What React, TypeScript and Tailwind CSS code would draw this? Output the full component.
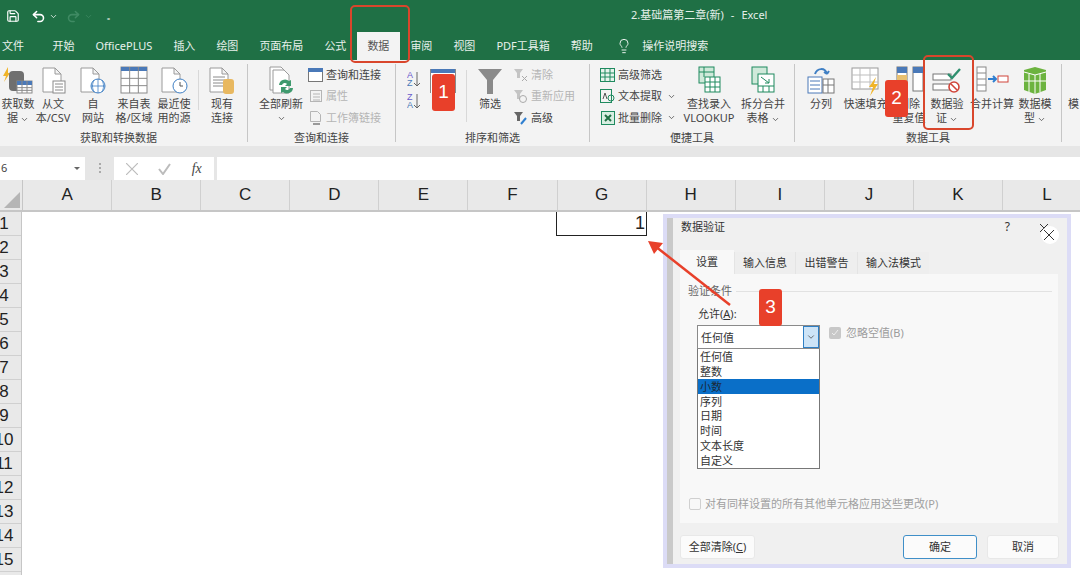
import { ChevronDown, Lightbulb, Redo2, Save, Undo2 } from "lucide-react";
import type { ReactNode } from "react";

const FONT = "font-['Noto_Sans','Noto_Sans_CJK_SC',sans-serif]";
const TABS = ["文件", "开始", "OfficePLUS", "插入", "绘图", "页面布局", "公式", "数据", "审阅", "视图", "PDF工具箱", "帮助"];
const COLS = ["A", "B", "C", "D", "E", "F", "G", "H", "I", "J", "K", "L"];
const ROWS = [1, 2, 3, 4, 5, 6, 7, 8, 9, 10, 11, 12, 13, 14, 15, 16];
const LIST = ["任何值", "整数", "小数", "序列", "日期", "时间", "文本长度", "自定义"];

function Ico({ children, w = 32 }: { children: ReactNode; w?: number }) {
  return (
    <svg width={w} height="32" viewBox={`0 0 ${w} 32`} fill="none" className="shrink-0">
      {children}
    </svg>
  );
}

function Page({ x = 6 }: { x?: number }) {
  return <path d={`M${x} 3h12l6 6v18H${x}z M${x + 12} 3v6h6`} fill="#fff" stroke="#9a9a9a" />;
}

function Sheet({ x, y, w, h }: { x: number; y: number; w: number; h: number }) {
  const c = w / 3;
  const r = (h - 4) / 3;
  return (
    <g stroke="#8a8a8a" fill="#fff">
      <rect x={x} y={y} width={w} height={h} />
      <rect x={x} y={y} width={w} height={4} fill="#4a79b8" stroke="none" />
      <path d={`M${x + c} ${y}v${h}M${x + 2 * c} ${y}v${h}M${x} ${y + 4 + r}h${w}M${x} ${y + 4 + 2 * r}h${w}`} />
    </g>
  );
}

function RibbonBtn({ icon, lines, className }: { icon: ReactNode; lines: ReactNode[]; className: string }) {
  return (
    <div className={`flex shrink-0 flex-col items-center whitespace-nowrap text-[11px] leading-[14px] ${className}`}>
      <div className="flex h-[33px] items-center justify-center">{icon}</div>
      {lines.map((l, i) => (
        <div key={i}>{l}</div>
      ))}
    </div>
  );
}

function Caret() {
  return <ChevronDown className="ml-[2px] inline h-[9px] w-[9px]" strokeWidth={2} />;
}

function Group({ label, children, className }: { label: string; children: ReactNode; className: string }) {
  return (
    <div className={`flex h-[78px] shrink-0 flex-col border-r border-[#c6c6c6] ${className}`}>
      <div className="flex h-[67px] shrink-0">{children}</div>
      <div className="shrink-0 text-center text-[11px] leading-[14px]">{label}</div>
    </div>
  );
}

function SmallRow({ icon, text, muted, caret }: { icon: ReactNode; text: string; muted?: boolean; caret?: boolean }) {
  return (
    <div className={`flex h-[21.5px] items-center gap-[3px] whitespace-nowrap text-[11px] ${muted ? "text-[#b5b5b5]" : ""}`}>
      <svg width="15" height="16" viewBox="0 0 15 16" fill="none" className="shrink-0">
        {icon}
      </svg>
      {text}
      {caret && <Caret />}
    </div>
  );
}

function SortIcon({ top, bottom }: { top: string; bottom: string }) {
  return (
    <svg width="16" height="18" viewBox="0 0 16 18" fill="none">
      <text x="0" y="8" fontSize="9" fill="#6a5acd" fontFamily="Liberation Sans">{top}</text>
      <text x="0" y="16" fontSize="9" fill="#4a79b8" fontFamily="Liberation Sans">{bottom}</text>
      <path d="M10 2v14m-3-3 3 3 3-3" stroke="#666" />
    </svg>
  );
}

function Ribbon() {
  return (
    <div className="flex h-[86px] items-start overflow-hidden bg-[#f3f3f3] pt-[4px] text-[#444]">
      <Group label="获取和转换数据" className="-ml-[10px] w-[258px]">
        <RibbonBtn
          className="ml-[8px] w-[40px]"
          lines={["获取数", <>据<Caret /></>]}
          icon={
            <Ico>
              <path d="M6 2l-5 9h3l-2 6 6-9H6z" fill="#f0b429" />
              <rect x="7" y="6" width="15" height="20" rx="4" fill="#6f6f6f" />
              <Sheet x={15} y={16} w={15} h={12} />
            </Ico>
          }
        />
        <RibbonBtn
          className="w-[30px]"
          lines={["从文", "本/CSV"]}
          icon={
            <Ico>
              <Page />
              <rect x="16" y="16" width="12" height="12" fill="#fff" stroke="#8a8a8a" />
              <path d="M18 19h8M18 22h8M18 25h8" stroke="#8a8a8a" />
            </Ico>
          }
        />
        <RibbonBtn
          className="w-[50px]"
          lines={["自", "网站"]}
          icon={
            <Ico>
              <Page x={4} />
              <circle cx="21" cy="21" r="7" fill="#fff" stroke="#3f7fc4" />
              <path d="M14 21h14M21 14v14M17 15c-2 4-2 8 0 12M25 15c2 4 2 8 0 12" stroke="#3f7fc4" strokeWidth=".8" />
            </Ico>
          }
        />
        <RibbonBtn className="w-[32px]" lines={["来自表", "格/区域"]} icon={<Ico><Sheet x={3} y={2} w={26} h={26} /></Ico>} />
        <RibbonBtn
          className="w-[48px]"
          lines={["最近使", "用的源"]}
          icon={
            <Ico>
              <Page x={4} />
              <circle cx="22" cy="21" r="7" fill="#fff" stroke="#3f7fc4" />
              <path d="M22 17v4h3" stroke="#555" />
            </Ico>
          }
        />
        <div className="my-[6px] h-[40px] w-px bg-[#d8d8d8]" />
        <RibbonBtn
          className="w-[46px]"
          lines={["现有", "连接"]}
          icon={
            <Ico>
              <Page x={4} />
              <path d="M7 12h12M7 15h12M7 18h10M7 21h10" stroke="#8a8a8a" />
              <rect x="17" y="14" width="11" height="15" rx="3" fill="#e8b860" />
            </Ico>
          }
        />
      </Group>

      <Group label="查询和连接" className="w-[148px]">
        <RibbonBtn
          className="w-[60px] pl-[6px]"
          lines={["全部刷新", <ChevronDown key="c" className="mx-auto mt-[3px] h-[9px] w-[9px]" />]}
          icon={
            <Ico>
              <path d="M5 2h11l5 5v18H5z" fill="#fff" stroke="#9a9a9a" />
              <path d="M8 5h11l5 5v18H8z" fill="#fff" stroke="#9a9a9a" />
              <path d="M14 20a6 6 0 0 1 10-4l2-1v6h-6l2-2a3 3 0 0 0-5 1zM28 23a6 6 0 0 1-10 4l-2 1v-6h6l-2 2a3 3 0 0 0 5-1z" fill="#3f9a6e" />
            </Ico>
          }
        />
        <div className="flex flex-col">
          <SmallRow text="查询和连接" icon={<><rect x=".5" y="1.5" width="14" height="13" fill="#fff" stroke="#777" /><rect x="0" y="1" width="15" height="4" fill="#4a79b8" /></>} />
          <SmallRow muted text="属性" icon={<><rect x="2.5" y="2.5" width="11" height="11" stroke="#b5b5b5" /><path d="M5 6h7M5 9h7M5 12h7" stroke="#b5b5b5" /></>} />
          <SmallRow muted text="工作簿链接" icon={<><path d="M2.5 1.5h7l3 3v7h-10z" stroke="#b5b5b5" /><path d="M5 14h7" stroke="#999" strokeWidth="2" /></>} />
        </div>
      </Group>

      <Group label="排序和筛选" className="w-[194px]">
        <div className="ml-[11px] flex w-[19px] flex-col gap-[4px] pt-[6px]">
          <SortIcon top="A" bottom="Z" />
          <SortIcon top="Z" bottom="A" />
        </div>
        <div className="mt-[5px] ml-[4px] h-[24px] w-[26px] border-x border-[#8a8a8a] bg-white">
          <div className="h-[4px] bg-[#4a79b8]" />
        </div>
        <div className="mr-[5px] ml-[10px] mt-[6px] h-[52px] w-px bg-[#d8d8d8]" />
        <RibbonBtn
          className="w-[36px]"
          lines={["筛选"]}
          icon={
            <Ico w={28}>
              <path d="M2 4h24L17 15v14h-6V15z" fill="#8a8a8a" />
            </Ico>
          }
        />
        <div className="ml-[5px] flex flex-col">
          <SmallRow muted text="清除" icon={<><path d="M1 2h9L7 6v5H4V6z" fill="#c4c4c4" /><path d="M9 9l5 5m0-5-5 5" stroke="#aaa" /></>} />
          <SmallRow muted text="重新应用" icon={<><path d="M1 2h9L7 6v5H4V6z" fill="#c4c4c4" /><circle cx="10" cy="11" r="3.5" stroke="#aaa" /></>} />
          <SmallRow text="高级" icon={<><path d="M1 2h9L7 6v5H4V6z" fill="#666" /><path d="M8 14l5-6" stroke="#2f7fd0" strokeWidth="2" /></>} />
        </div>
      </Group>

      <Group label="便捷工具" className="w-[205px]">
        <div className="ml-[10px] flex w-[81px] flex-col">
          <SmallRow text="高级筛选" icon={<><rect x=".5" y="1.5" width="14" height="13" stroke="#1f8a5f" fill="#e6f3ec" /><path d="M5 2v12M10 2v12M1 6h14M1 10h14" stroke="#1f8a5f" /></>} />
          <SmallRow caret text="文本提取" icon={<><rect x=".5" y="1.5" width="11" height="13" stroke="#1f8a5f" /><path d="M3 11l2-6 2 6" stroke="#555" /><circle cx="11" cy="10" r="3" stroke="#1f8a5f" /></>} />
          <SmallRow caret text="批量删除" icon={<><rect x="1.5" y="1.5" width="13" height="13" stroke="#1f8a5f" fill="#d8eee2" /><path d="M5 5l6 6m0-6-6 6" stroke="#1f7044" strokeWidth="2" /></>} />
        </div>
        <RibbonBtn
          className="w-[56px]"
          lines={["查找录入", "VLOOKUP"]}
          icon={
            <Ico>
              <rect x="6" y="2" width="15" height="16" fill="#cfe9da" stroke="#1f8a5f" />
              <rect x="12" y="12" width="15" height="15" fill="#fff" stroke="#1f8a5f" />
              <path d="M17 12v15M22 12v15M12 17h15M12 22h15M6 7h15M11 2v10" stroke="#1f8a5f" />
            </Ico>
          }
        />
        <RibbonBtn
          className="w-[52px]"
          lines={["拆分合并", <>表格<Caret /></>]}
          icon={
            <Ico>
              <rect x="5" y="2" width="15" height="17" fill="#cfe9da" stroke="#1f8a5f" />
              <rect x="11" y="9" width="16" height="18" fill="#fff" stroke="#1f8a5f" />
              <path d="M11 21h16M16 21v6M22 21v6M14 12l8 6m0-4v4h-4" stroke="#1f8a5f" />
            </Ico>
          }
        />
      </Group>

      <Group label="数据工具" className="w-[267px]">
        <RibbonBtn
          className="ml-[8px] w-[36px]"
          lines={["分列"]}
          icon={
            <Ico>
              <rect x="3" y="12" width="14" height="16" fill="#fff" stroke="#4a79b8" />
              <path d="M5 16h10M5 20h10M5 24h10" stroke="#4a79b8" />
              <rect x="18" y="14" width="11" height="14" fill="#fff" stroke="#777" />
              <path d="M23 14v14M18 20h11" stroke="#777" />
              <path d="M10 9c2-6 10-7 12 0m0 0-3-2m3 2 2-3" stroke="#3f7fc4" strokeWidth="2" />
            </Ico>
          }
        />
        <RibbonBtn
          className="w-[53px]"
          lines={["快速填充"]}
          icon={
            <Ico>
              <rect x="2" y="3" width="26" height="21" fill="#fff" stroke="#999" />
              <path d="M2 10h26M2 17h26M10 3v21M20 3v21" stroke="#bdbdbd" />
              <path d="M26 12l-7 10h4l-3 9 8-12h-4z" fill="#f0b429" />
            </Ico>
          }
        />
        <RibbonBtn
          className="w-[34px]"
          lines={["删除", "重复值"]}
          icon={
            <Ico>
              <rect x="4" y="2" width="10" height="24" fill="#fff" stroke="#777" />
              <rect x="4" y="2" width="10" height="6" fill="#4a79b8" />
              <rect x="4" y="10" width="10" height="6" fill="#e8c070" />
              <rect x="20" y="2" width="10" height="24" fill="#fff" stroke="#777" />
              <rect x="20" y="2" width="10" height="6" fill="#4a79b8" />
            </Ico>
          }
        />
        <RibbonBtn
          className="ml-[4px] w-[34px]"
          lines={["数据验", <>证<Caret /></>]}
          icon={
            <Ico>
              <rect x="2" y="9" width="18" height="6" fill="#fff" stroke="#777" />
              <rect x="2" y="19" width="18" height="6" fill="#fff" stroke="#777" />
              <path d="M17 9l4 4 8-9" stroke="#2f8f6f" strokeWidth="2.4" />
              <circle cx="23" cy="22" r="5" fill="#fff" stroke="#d0453a" strokeWidth="1.6" />
              <path d="M20 19l6 6" stroke="#d0453a" strokeWidth="1.6" />
            </Ico>
          }
        />
        <RibbonBtn
          className="ml-[6px] w-[44px]"
          lines={["合并计算"]}
          icon={
            <Ico w={34}>
              <rect x="2" y="2" width="9" height="24" fill="#fff" stroke="#888" />
              <path d="M2 8h9M2 14h9M2 20h9" stroke="#888" />
              <path d="M13 14h8m-3-3 3 3-3 3" stroke="#2f7fd0" strokeWidth="2" />
              <rect x="23" y="11" width="10" height="6" fill="#fff" stroke="#d0453a" />
            </Ico>
          }
        />
        <RibbonBtn
          className="ml-[4px] w-[34px]"
          lines={["数据模", <>型<Caret /></>]}
          icon={
            <Ico>
              <path d="M5 5l11-3 11 3v20l-11 4-11-4z" fill="#6cb33f" />
              <path d="M16 10v19M16 10l11-3M16 10 5 7M21 9v18M10 9v18M16 16h11M5 16h11" stroke="#fff" />
            </Ico>
          }
        />
      </Group>
      <div className="ml-[6px] pt-[33px] text-[11px] leading-[14px] whitespace-nowrap">模</div>
    </div>
  );
}

function FormulaBar() {
  return (
    <div className="flex h-[34px] items-start gap-[3px] bg-[#e6e6e6] pt-[11px]">
      <div className="flex h-[23px] w-[85px] items-center justify-between bg-white pl-px pr-[5px] text-[11px] text-[#444]">
        6
        <span className="h-0 w-0 border-x-[3px] border-t-[3px] border-x-transparent border-t-[#666]" />
      </div>
      <div className="flex w-[23px] flex-col items-center gap-[2px] pt-[6px]">
        <i className="h-[2px] w-[2px] bg-[#aaa]" />
        <i className="h-[2px] w-[2px] bg-[#aaa]" />
        <i className="h-[2px] w-[2px] bg-[#aaa]" />
      </div>
      <div className="flex h-[23px] w-[100px] items-center justify-around bg-white px-[2px] text-[#bcbcbc]">
        <svg width="12" height="12" viewBox="0 0 12 12" stroke="currentColor" strokeWidth="1.2"><path d="M0 0l12 12M12 0 0 12" /></svg>
        <svg width="13" height="12" viewBox="0 0 13 12" fill="none" stroke="currentColor" strokeWidth="2"><path d="M1 6l4 5 7-10" /></svg>
        <span className="font-['Liberation_Serif',serif] text-[14px] italic text-[#444]">fx</span>
      </div>
      <div className="h-[23px] flex-1 bg-white" />
    </div>
  );
}

function Sheet1() {
  return (
    <div className="overflow-hidden bg-white">
      <div className="flex h-[32px] border-b-2 border-[#c6c6c6] bg-[#e9e9e9]">
        <div className="relative w-[23px] shrink-0 border-r border-[#c6c6c6]">
          <span className="absolute right-[2px] bottom-[2px] h-0 w-0 border-b-[16px] border-l-[16px] border-b-[#b5b5b5] border-l-transparent" />
        </div>
        {COLS.map((c) => (
          <div key={c} className="flex w-[89.1px] shrink-0 items-center justify-center border-r border-[#d0d0d0] font-['Liberation_Sans',sans-serif] text-[17px] text-[#222]">
            {c}
          </div>
        ))}
      </div>
      <div className="flex">
        <div className="w-[22px] shrink-0 overflow-hidden border-r border-[#c6c6c6] bg-[#e9e9e9]">
          {ROWS.map((r) => (
            <div key={r} className="-ml-[14px] h-[24px] w-[36px] border-b border-[#d0d0d0] text-center font-['Liberation_Sans',sans-serif] text-[17px] leading-[23px] text-[#222]">
              {r}
            </div>
          ))}
        </div>
        <div className="ml-[534px] h-[24px] w-[91px] border border-t-0 border-[#222] pr-px text-right font-['Liberation_Sans',sans-serif] text-[18px] leading-[23px] text-[#222]">
          1
        </div>
      </div>
    </div>
  );
}

function Dialog() {
  return (
    <div className="absolute top-[214px] left-[663px] flex h-[354px] w-[408px] border-4 border-[#dcdcf6] text-[11px] text-[#333]">
      <div className="w-[6px] bg-[#c9c9c9]" />
      <div className="flex flex-1 flex-col bg-[#f0f0f0] pl-[7px] pr-[8px]">
        <div className="flex h-[32px] shrink-0 items-start justify-between pt-[2px] pl-px">
          <span className="leading-[14px]">数据验证</span>
          <span className="mr-[49px] text-[12px] leading-[14px]">?</span>
        </div>
        <div className="flex h-[24px] items-end text-[11px]">
          <div className="flex h-[24px] w-[54px] items-center justify-center bg-[#f8f8f8]">设置</div>
          {[["输入信息", "w-[61px]"], ["出错警告", "w-[62px]"], ["输入法模式", "w-[72px]"]].map(([t, w]) => (
            <div key={t} className={`flex h-[22px] items-center justify-center border-l border-[#e4e4e4] bg-[#eeeeee] ${w}`}>{t}</div>
          ))}
        </div>
        <div className="flex h-[249px] w-[378px] flex-col bg-[#f8f8f8] pl-[8px] pr-[6px]">
          <div className="mt-[10px] flex h-[14px] items-center gap-[4px] text-[#666]">
            验证条件
            <div className="h-px flex-1 bg-[#e2e2e2]" />
          </div>
          <div className="mt-[8px] pl-[10px] leading-[16px]">允许(<u>A</u>):</div>
          <div className="mt-[3px] flex pl-[9px]">
            <div className="w-[123px]">
              <div className="flex h-[24px] border border-[#8a8a8a] bg-white">
                <span className="flex-1 pl-[3px] leading-[23px]">任何值</span>
                <span className="flex w-[16px] items-center justify-center border border-[#2f7fc4] bg-[#cde4f7] text-[#555]">
                  <ChevronDown className="h-[10px] w-[10px]" />
                </span>
              </div>
              <div className="border border-t-0 border-[#777] bg-white">
                {LIST.map((l) => (
                  <div key={l} className={`h-[14.85px] pl-[2px] leading-[15px] ${l === "小数" ? "bg-[#0a6fc8] text-[#1a2a3a]" : ""}`}>
                    {l}
                  </div>
                ))}
              </div>
            </div>
            <div className="ml-[9px] flex h-[16px] items-center gap-[5px] text-[#9c9c9c]">
              <span className="flex h-[12px] w-[12px] items-center justify-center rounded-[2px] bg-[#c8c8c8]">
                <svg width="8" height="8" viewBox="0 0 8 8" fill="none" stroke="#eee"><path d="M1 4l2 2 4-5" /></svg>
              </span>
              忽略空值(B)
            </div>
          </div>
          <div className="mt-[27px] flex items-center gap-[4px] pl-px text-[#a0a0a0]">
            <span className="h-[12px] w-[12px] rounded-[2px] border border-[#d0d0d0]" />
            对有同样设置的所有其他单元格应用这些更改(P)
          </div>
        </div>
        <div className="mt-[12px] flex text-[11px]">
          <div className="flex h-[24px] w-[75px] items-center justify-center rounded-[3px] border border-[#e8e8e8] bg-[#fbfbfb]">全部清除(<u>C</u>)</div>
          <div className="ml-auto flex h-[24px] w-[74px] items-center justify-center rounded-[3px] border border-[#3f8fc8] bg-[#fbfbfb]">确定</div>
          <div className="ml-[10px] flex h-[24px] w-[72px] items-center justify-center rounded-[3px] border border-[#e8e8e8] bg-[#fbfbfb]">取消</div>
        </div>
      </div>
    </div>
  );
}

function Badge({ n, className }: { n: number; className: string }) {
  return (
    <div className={`absolute flex h-[37px] w-[23px] items-center justify-center rounded-[3px] bg-[#e8402a] font-['Liberation_Sans',sans-serif] text-[19px] text-white ${className}`}>
      {n}
    </div>
  );
}

export default function App() {
  return (
    <div className={`relative h-[575px] w-[1080px] overflow-hidden bg-white ${FONT}`}>
      <div className="relative h-[32px] bg-[#1f7045] text-white">
        <div className="flex h-full items-center pl-[6px]">
          <Save className="h-[14px] w-[14px]" strokeWidth={2} />
          <Undo2 className="ml-[11px] h-[15px] w-[15px]" strokeWidth={2.5} />
          <ChevronDown className="ml-[3px] h-[9px] w-[9px]" strokeWidth={2} />
          <Redo2 className="ml-[8px] h-[15px] w-[15px] text-[#3f8a63]" strokeWidth={2.5} />
          <ChevronDown className="ml-[3px] h-[9px] w-[9px] text-[#3f8a63]" strokeWidth={2} />
          <span className="ml-[14px] text-[9px] leading-none">₌</span>
        </div>
        <div className="absolute top-[7px] left-[631px] text-[11px] leading-[16px] text-[#e4efe9] whitespace-nowrap">
          2.基础篇第二章(新)<span className="mx-[7px]">-</span>Excel
        </div>
      </div>

      <div className="flex h-[28px] items-stretch bg-[#1f7045] text-[11px] text-[#e8f1ec]">
        {TABS.map((t) => (
          <div
            key={t}
            className={`flex items-center justify-center whitespace-nowrap px-[10.5px] first:pl-[2px] first:pr-[18px] ${t === "数据" ? "bg-[#f3f3f3] text-[#555]" : ""}`}
          >
            {t}
          </div>
        ))}
        <div className="ml-[13px] flex items-center gap-[10px]">
          <Lightbulb className="h-[16px] w-[16px]" strokeWidth={1.5} />
          操作说明搜索
        </div>
      </div>

      <Ribbon />
      <FormulaBar />
      <Sheet1 />
      <Dialog />

      {/* close button with the double cross sits over the dialog edge */}
      <div className="absolute top-[223px] left-[1037px] h-[22px] w-[24px] text-[#333]">
        <svg width="24" height="24" viewBox="0 0 24 24" stroke="currentColor">
          <path d="M3 1l8 8M11 1l-8 8" />
          <circle cx="13" cy="12" r="9" fill="#fff" stroke="none" />
          <path d="M7 7l10 10M17 7 7 17" />
        </svg>
      </div>

      {/* callouts drawn on top of the screenshot */}
      <div className="absolute top-[5px] left-[350px] h-[58px] w-[60px] rounded-[5px] border-2 border-[#d9462c]" />
      <div className="absolute top-[55px] left-[923px] h-[75px] w-[51px] rounded-[5px] border-2 border-[#d9462c]" />
      <Badge n={1} className="top-[74px] left-[432px]" />
      <Badge n={2} className="top-[80px] left-[885px]" />
      <Badge n={3} className="top-[289px] left-[759px]" />
      <svg width="100" height="80" viewBox="0 0 100 80" className="absolute top-[237px] left-[641px]">
        <path d="M89 68 14 9" stroke="#e8402a" strokeWidth="2.5" />
        <path d="M7 4l15 2-9 11z" fill="#e8402a" />
      </svg>
    </div>
  );
}
